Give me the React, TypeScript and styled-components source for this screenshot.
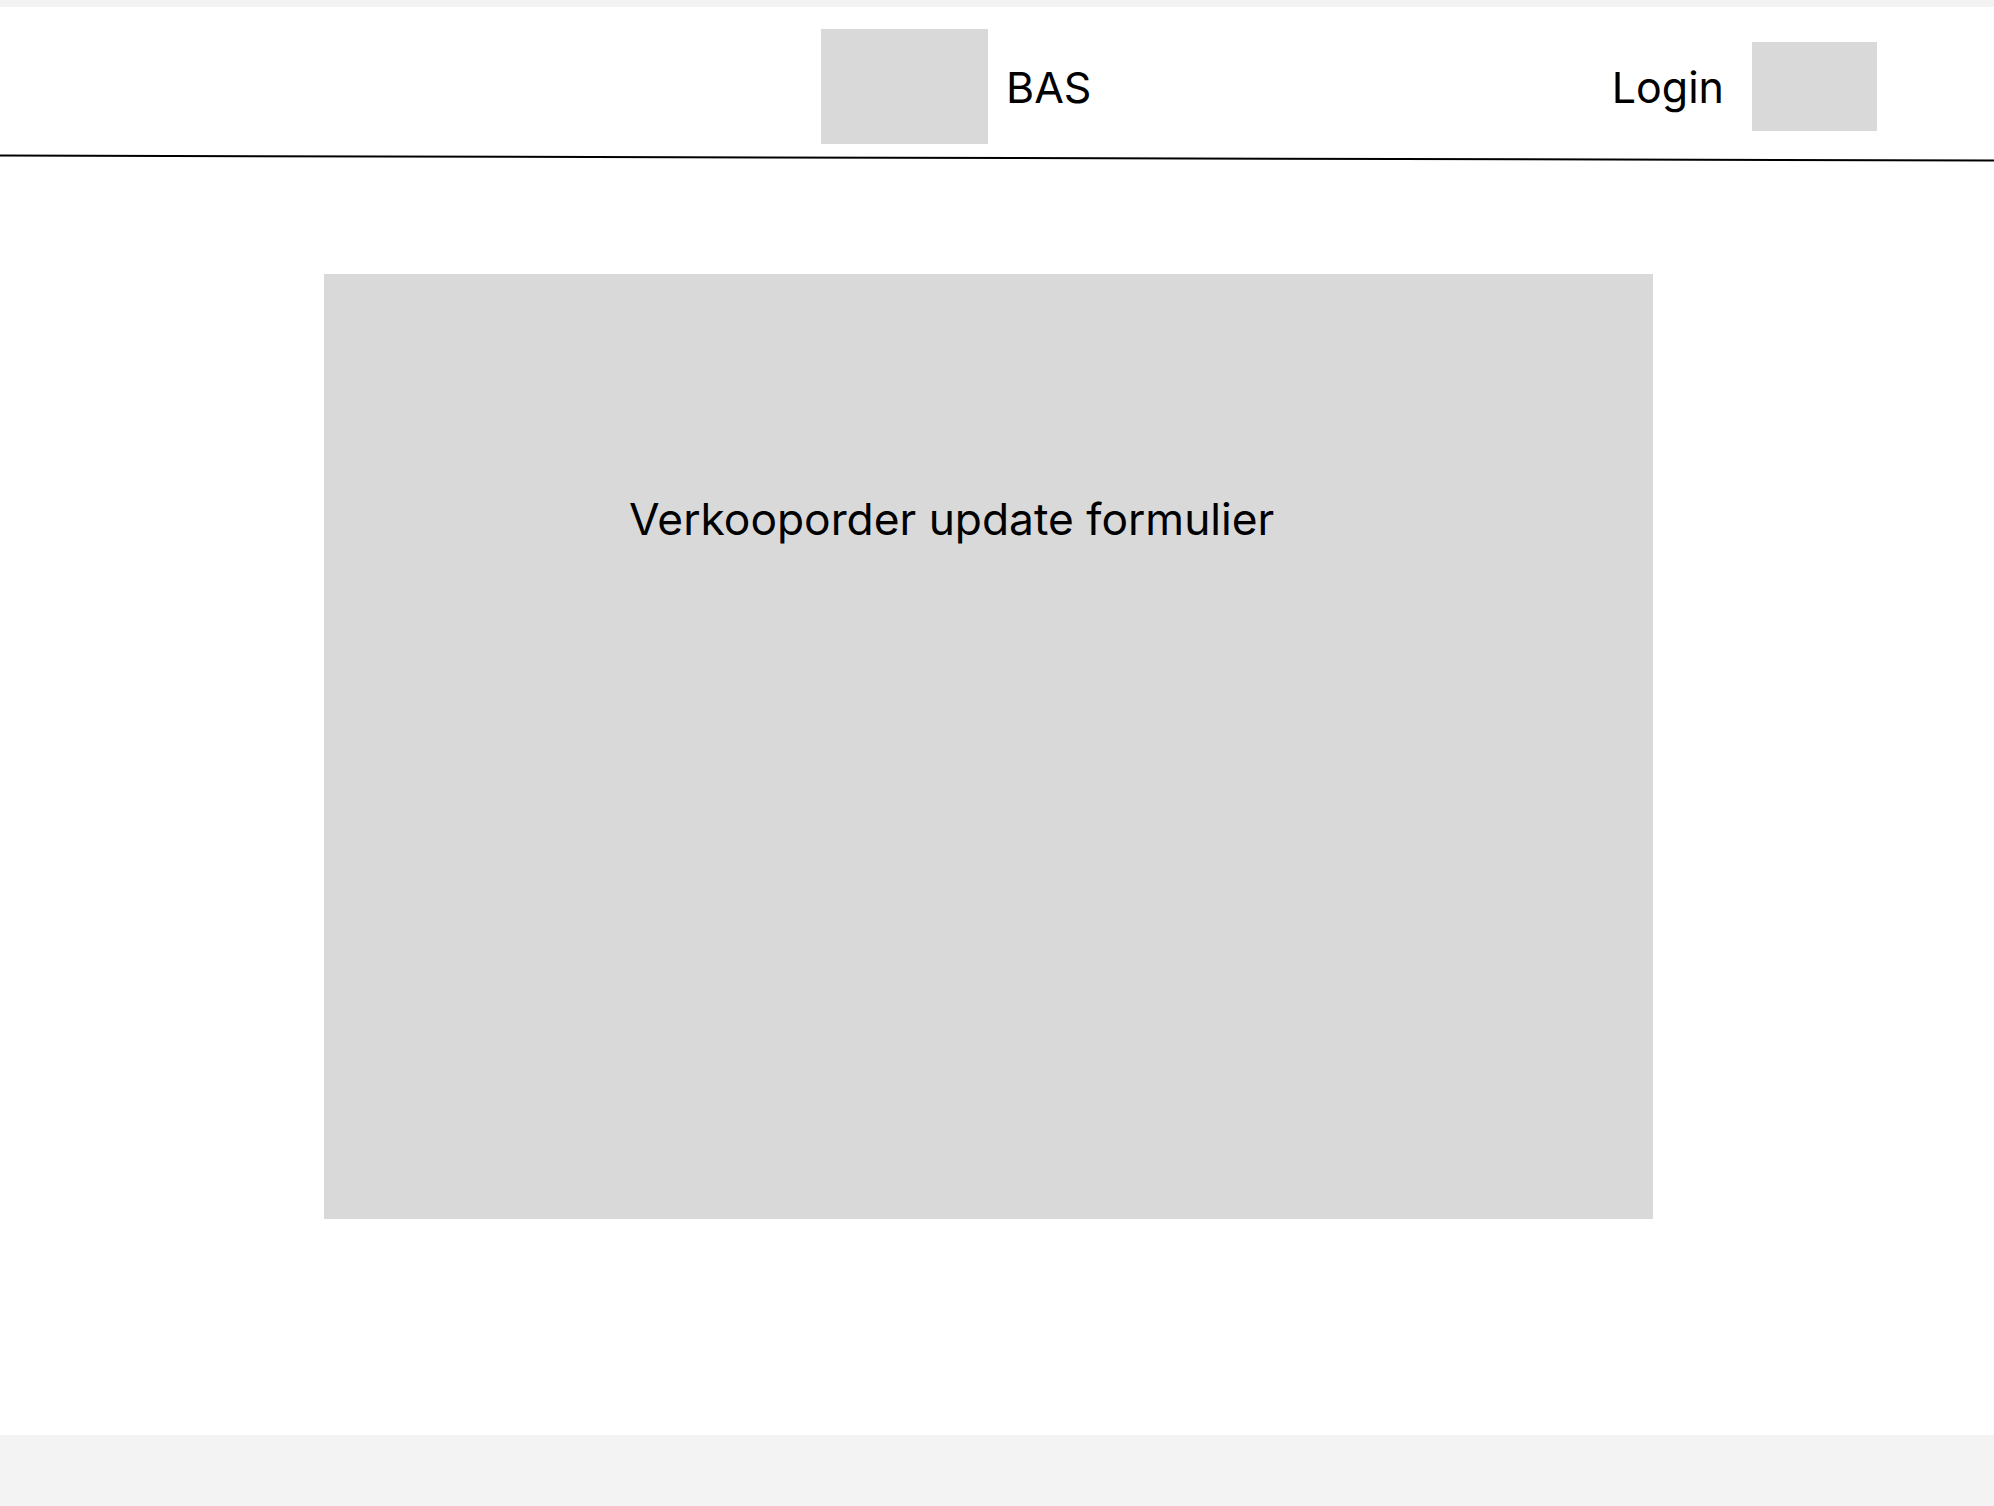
import React from "react";
import styled, { createGlobalStyle } from "styled-components";

const GlobalStyle = createGlobalStyle`
  html, body {
    margin: 0;
    padding: 0;
    background: #ffffff;
    overflow: hidden;
  }
  * { box-sizing: border-box; }
  body {
    font-family: Inter, "Noto Sans", "Liberation Sans", sans-serif;
    color: #000000;
  }
`;

const Page = styled.div`
  display: flex;
  flex-direction: column;
  width: 1994px;
  height: 1506px;
  background: #ffffff;
`;

const TopStrip = styled.div`
  height: 7px;
  background: #f3f3f3;
  flex-shrink: 0;
`;

const Header = styled.header`
  height: 150px;
  padding: 9px 117px 0 821px;
  display: flex;
  align-items: center;
  flex-shrink: 0;
`;

const Placeholder = styled.div<{ $w: number; $h: number }>`
  width: ${(p) => p.$w}px;
  height: ${(p) => p.$h}px;
  background: #d9d9d9;
  flex-shrink: 0;
`;

const Label = styled.span<{ $gap?: number }>`
  font-size: 43px;
  line-height: normal;
  font-weight: 400;
  margin-left: ${(p) => p.$gap ?? 0}px;
`;

const Brand = styled.div`
  display: flex;
  align-items: center;
`;

const Spacer = styled.div`
  flex: 1;
`;

const UserArea = styled.div`
  display: flex;
  align-items: center;
  gap: 28px;
`;

const Divider = styled.div`
  height: 1.5px;
  background: #000000;
  transform: rotate(0.144deg);
  flex-shrink: 0;
`;

const Main = styled.main`
  flex: 1;
  padding: 115.5px 0 0 324px;
`;

const Card = styled.section`
  width: 1329px;
  height: 945px;
  background: #d9d9d9;
  padding: 218px 0 0 305px;
`;

const CardTitle = styled.h1`
  margin: 0;
  font-size: 44.3px;
  font-weight: 400;
  line-height: normal;
`;

const Footer = styled.footer`
  height: 71px;
  background: #f3f3f3;
  flex-shrink: 0;
`;

export default function App() {
  return (
    <>
      <GlobalStyle />
      <Page>
        <TopStrip />
        <Header>
          <Brand>
            <Placeholder $w={167} $h={115} />
            <Label $gap={18}>BAS</Label>
          </Brand>
          <Spacer />
          <UserArea>
            <Label>Login</Label>
            <Placeholder $w={125} $h={89} />
          </UserArea>
        </Header>
        <Divider />
        <Main>
          <Card>
            <CardTitle>Verkooporder update formulier</CardTitle>
          </Card>
        </Main>
        <Footer />
      </Page>
    </>
  );
}
